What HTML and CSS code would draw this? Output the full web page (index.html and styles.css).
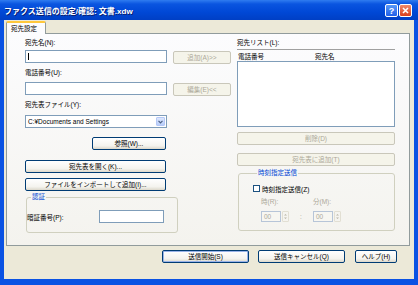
FILE: index.html
```html
<!DOCTYPE html>
<html lang="ja">
<head>
    <meta charset="UTF-8">
    <meta name="viewport" content="width=device-width, initial-scale=1.0">
    <title>ファクス送信の設定/確認</title>
    <link rel="stylesheet" href="styles.css">
</head>
<body>

<div class="window">
    <div class="titlebar">
        <span class="title">ファクス送信の設定/確認: 文書.xdw</span>
        <div class="caption-buttons">
            <span class="cap-btn help">?</span>
            <span class="cap-btn close">
                <svg width="7" height="7" viewBox="0 0 7 7"><path d="M1 1L6 6M6 1L1 6" stroke="#fff" stroke-width="1.6"/></svg>
            </span>
        </div>
    </div>

    <div class="frame">
        <div class="tabs">
            <div class="tab">宛先設定</div>
        </div>

        <div class="panel">
            <!-- 左側 -->
            <div class="col-left">
                <div class="lbl">宛先名(N):</div>
                <div class="row row-first">
                    <span class="field-wrap">
                        <input type="text" class="field wide">
                        <span class="caret"></span>
                    </span>
                    <button class="btn side" disabled>追加(A)&gt;&gt;</button>
                </div>

                <div class="lbl gap4">電話番号(U):</div>
                <div class="row row-next">
                    <input type="text" class="field wide">
                    <button class="btn side" disabled>編集(E)&lt;&lt;</button>
                </div>

                <div class="lbl gap4">宛先表ファイル(Y):</div>
                <div class="combo">
                    <span class="combo-text">C:¥Documents and Settings</span>
                    <span class="combo-arrow">
                        <svg width="5" height="4" viewBox="0 0 5 4"><path d="M0.5 0.8L2.5 2.8L4.5 0.8" fill="none" stroke="#4d6185" stroke-width="1.2"/></svg>
                    </span>
                </div>

                <button class="btn browse">参照(W)...</button>
                <button class="btn full open">宛先表を開く(K)...</button>
                <button class="btn full import">ファイルをインポートして追加(I)...</button>

                <fieldset class="group auth">
                    <legend>認証</legend>
                    <div class="pin-row">
                        <span class="pin-label">暗証番号(P):</span>
                        <input type="text" class="field pin">
                    </div>
                </fieldset>
            </div>

            <!-- 右側 -->
            <div class="col-right">
                <div class="lbl">宛先リスト(L):</div>
                <div class="list-head">
                    <span class="col-phone">電話番号</span>
                    <span class="col-name">宛先名</span>
                </div>
                <div class="list-body"></div>

                <button class="btn wide-btn delete" disabled>削除(D)</button>
                <button class="btn wide-btn add-book" disabled>宛先表に追加(T)</button>

                <fieldset class="group timer">
                    <legend>時刻指定送信</legend>
                    <label class="check-row">
                        <span class="checkbox"></span>
                        時刻指定送信(Z)
                    </label>
                    <div class="time-labels">
                        <span class="t-hour">時(R):</span>
                        <span>分(M):</span>
                    </div>
                    <div class="time-row">
                        <span class="spin-text">00</span>
                        <span class="spin-btn">
                            <svg width="3" height="7" viewBox="0 0 3 7"><path d="M0 2.5L1.5 1L3 2.5ZM0 4.5L1.5 6L3 4.5Z" fill="#b9b6a8"/></svg>
                        </span>
                        <span class="colon">:</span>
                        <span class="spin-text">00</span>
                        <span class="spin-btn">
                            <svg width="3" height="7" viewBox="0 0 3 7"><path d="M0 2.5L1.5 1L3 2.5ZM0 4.5L1.5 6L3 4.5Z" fill="#b9b6a8"/></svg>
                        </span>
                    </div>
                </fieldset>
            </div>
        </div>

        <div class="footer">
            <button class="btn foot default">送信開始(S)</button>
            <button class="btn foot">送信キャンセル(Q)</button>
            <button class="btn foot help-btn">ヘルプ(H)</button>
        </div>
    </div>
</div>

</body>
</html>
```

FILE: styles.css
```css
/* 基本 */
* {
    box-sizing: border-box;
}

body {
    margin: 0;
    font-family: "Liberation Sans", "Noto Sans CJK JP", sans-serif;
    font-size: 6.5px;
    color: #000;
    background: #ece9d8;
}

.window {
    width: 418px;
    height: 285px;
    display: flex;
    flex-direction: column;
    background: #0a52e3;
}

/* タイトルバー */
.titlebar {
    height: 20px;
    display: flex;
    align-items: center;
    justify-content: space-between;
    padding: 1px 6px 0 4px;
    background: linear-gradient(#2f7cf0 0%, #0a55e0 20%, #0048d6 60%, #003fc4 100%);
}

.title {
    color: #fff;
    font-size: 8px;
    font-weight: bold;
    text-shadow: 1px 1px 0 #0a1e6e;
}

.caption-buttons {
    display: flex;
    gap: 1px;
}

.cap-btn {
    width: 13px;
    height: 13px;
    border: 1px solid #fff;
    border-radius: 2px;
    display: flex;
    align-items: center;
    justify-content: center;
    color: #fff;
    font-weight: bold;
    font-size: 9px;
}

.help {
    background: linear-gradient(#5a9af8, #1f5ee8);
}

.close {
    background: linear-gradient(#f08a6a, #d8401e);
}

/* 枠 */
.frame {
    flex: 1;
    display: flex;
    flex-direction: column;
    margin: 0 4px 6px;
    background: #ece9d8;
}

.tabs {
    height: 13px;
    padding-left: 2px;
}

.tab {
    width: 40px;
    height: 13px;
    margin-top: 1px;
    padding: 1px 0 0 4px;
    line-height: 9px;
    background: #fcfcfe;
    border: 1px solid #919b9c;
    border-top: 2px solid #ffc83c;
    border-bottom: none;
    border-radius: 2px 2px 0 0;
    position: relative;
    z-index: 1;
}

.panel {
    height: 213px;
    margin: 0 4px 0 2px;
    border: 1px solid #919b9c;
    background: linear-gradient(#fcfcfe, #f4f3ee);
    display: grid;
    grid-template-columns: 206px 158px;
    column-gap: 6px;
    padding: 4px 0 0 18px;
}

.col-left,
.col-right {
    display: flex;
    flex-direction: column;
    align-items: flex-start;
}

.lbl {
    line-height: 10px;
    height: 10px;
}

.gap4 {
    margin-top: 4px;
}

.row {
    display: flex;
    align-items: flex-start;
    gap: 6px;
}

.row-first {
    margin-top: 2px;
}

.row-next {
    margin-top: 4px;
}

/* 入力欄 */
.field {
    height: 13px;
    border: 1px solid #7f9db9;
    background: #fff;
    padding: 0;
    margin: 0;
    font: inherit;
}

.field.wide {
    width: 142px;
}

.field-wrap {
    position: relative;
    display: block;
    height: 13px;
}

.caret {
    position: absolute;
    left: 3px;
    top: 3px;
    width: 1px;
    height: 7px;
    background: #000;
}

/* ボタン */
.btn {
    height: 13px;
    padding: 0;
    font: inherit;
    line-height: 11px;
    color: #000;
    border: 1px solid #003c74;
    border-radius: 2px;
    background: linear-gradient(#ffffff, #f4f3ee 70%, #dcd8cb);
    white-space: nowrap;
}

.btn:disabled {
    color: #aca899;
    border-color: #c9c7ba;
    background: #f5f4ea;
}

.btn.side {
    width: 58px;
    margin-top: 1px;
}

.combo {
    width: 142px;
    height: 13px;
    margin-top: 5px;
    border: 1px solid #7f9db9;
    background: #fff;
    display: flex;
    align-items: center;
    justify-content: space-between;
    padding: 0 1px 0 2px;
}

.combo-arrow {
    width: 9px;
    height: 9px;
    border: 1px solid #b5c8f7;
    border-radius: 1px;
    background: linear-gradient(#dde7fd, #b8cdf9);
    display: flex;
    align-items: center;
    justify-content: center;
}

.browse {
    width: 74px;
    margin: 9px 0 0 67px;
}

.btn.full {
    width: 141px;
}

.open {
    margin-top: 10px;
}

.import {
    margin-top: 5px;
}

/* グループ */
.group {
    border: 1px solid #d0d0bf;
    border-radius: 3px;
    margin: 0;
    min-width: 0;
}

.group legend {
    color: #0046d5;
    line-height: 10px;
    padding: 0 1px;
    margin-left: 4px;
}

.auth {
    width: 152px;
    margin: 1px 0 0 1px;
    padding: 8px 0 9px 0;
}

.pin-row {
    display: flex;
    align-items: center;
}

.pin-label {
    width: 72px;
}

.field.pin {
    width: 65px;
}

/* 宛先リスト */
.list-head {
    width: 158px;
    height: 12px;
    margin-top: 1px;
    border-top: 1px solid #a0a0a0;
    display: flex;
    align-items: center;
    padding-left: 1px;
}

.col-phone {
    width: 77px;
}

.list-body {
    width: 158px;
    height: 66px;
    border: 1px solid #7f9db9;
    background: #fff;
}

.wide-btn {
    width: 158px;
}

.delete {
    margin-top: 5px;
}

.add-book {
    margin-top: 8px;
}

.timer {
    width: 157px;
    margin: 2px 0 0 1px;
    padding: 6px 0 8px 14px;
}

.check-row {
    display: flex;
    align-items: center;
    gap: 2px;
    height: 9px;
}

.checkbox {
    width: 7px;
    height: 7px;
    border: 1px solid #1c5180;
    background: #fff;
}

.time-labels {
    display: flex;
    height: 10px;
    line-height: 10px;
    margin: 4px 0 0 8px;
    color: #aca899;
}

.t-hour {
    width: 52px;
}

.time-row {
    display: flex;
    align-items: center;
    height: 11px;
    margin: 4px 0 0 8px;
    color: #aca899;
}

.spin-text {
    width: 20px;
    height: 11px;
    line-height: 9px;
    padding-left: 2px;
    border: 1px solid #b7c5d8;
    background: #f7f6f1;
}

.spin-btn {
    width: 7px;
    height: 11px;
    margin-left: 1px;
    border: 1px solid #e2dfd3;
    border-radius: 1px;
    display: flex;
    align-items: center;
    justify-content: center;
}

.colon {
    width: 24px;
    text-align: center;
}

/* 下部ボタン */
.footer {
    display: flex;
    justify-content: flex-end;
    gap: 9px;
    padding-right: 17px;
    margin-top: 4px;
}

.btn.foot {
    width: 87px;
}

.default {
    box-shadow: inset 0 0 0 1px #9ab3e8;
}

.help-btn {
    width: 42px !important;
    margin-left: 1px;
}
```
